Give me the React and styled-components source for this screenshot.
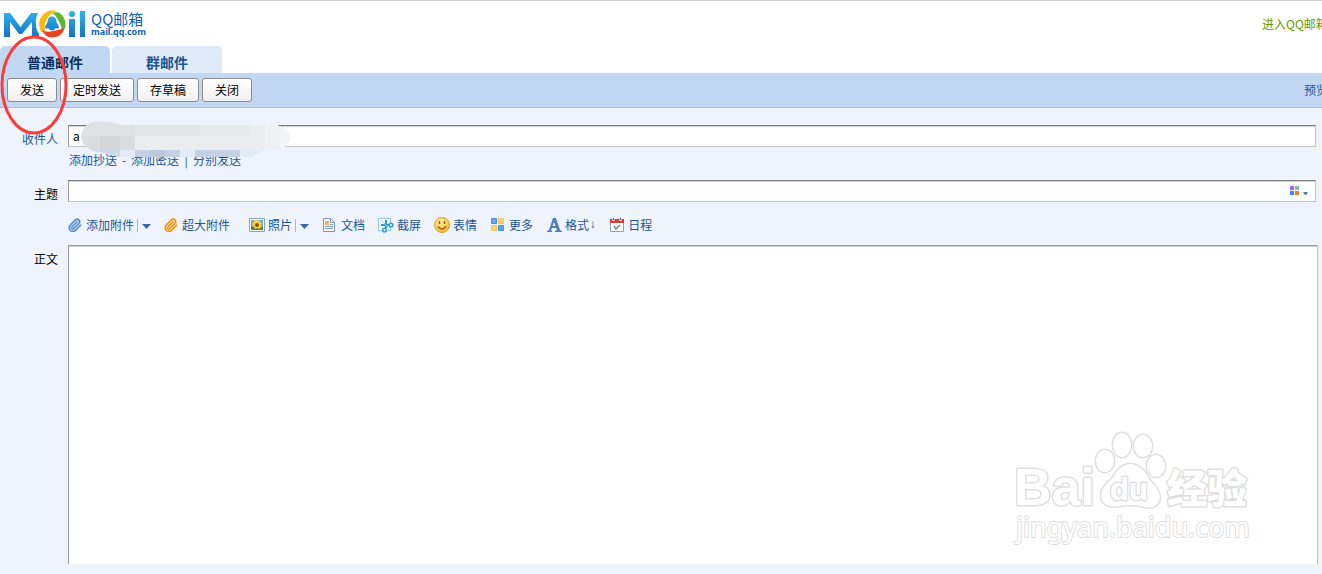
import React from "react";
import styled, { createGlobalStyle } from "styled-components";

const Global = createGlobalStyle`
  * { box-sizing: border-box; }
  body {
    margin: 0;
    background: #eff4fc;
    color: #000;
    font: 12px/16px "Noto Sans CJK SC", "Liberation Sans", sans-serif;
    overflow: hidden;
  }
  button, input, textarea { font: inherit; color: inherit; }
`;

const Page = styled.div`
  position: relative;
`;

const Header = styled.header`
  display: flex;
  justify-content: space-between;
  height: 46px;
  border-top: 1px solid #d0d0d0;
  background: #fff;
`;

const Brand = styled.a`
  display: flex;
  align-items: flex-start;
  gap: 4px;
  padding: 8px 0 0 4px;
  color: #0e63ad;
  text-decoration: none;
`;

const BrandText = styled.span`
  display: flex;
  flex-direction: column;
  padding-top: 3px;
`;

const BrandName = styled.span`
  font-size: 15px;
  line-height: 14px;
`;

const BrandHost = styled.span`
  font: bold 9px/12px "Noto Sans", sans-serif;
`;

const EnterLink = styled.a`
  width: 60px;
  padding-top: 15px;
  overflow: hidden;
  color: #619c00;
  white-space: nowrap;
  text-decoration: none;
`;

const Tabs = styled.nav`
  display: flex;
  gap: 2px;
  background: #fff;
`;

const Tab = styled.button`
  width: 110px;
  height: 27px;
  padding: 4px 0 0;
  border: 0;
  border-radius: 5px 5px 0 0;
  background: ${(p) => (p.$active ? "#c2d8f2" : "#e0ebf9")};
  color: ${(p) => (p.$active ? "#0b305f" : "#1d5494")};
  font-size: 14px;
  font-weight: bold;
`;

const ActionBar = styled.div`
  display: flex;
  align-items: center;
  gap: 3px;
  height: 35px;
  padding-left: 7px;
  border-bottom: 1px solid #a9c1dd;
  background: #c2d8f2;
`;

const ActionButton = styled.button`
  height: 24px;
  padding: 0 12px;
  border: 1px solid #8c8c8c;
  border-radius: 3px;
  background: linear-gradient(#fff, #efefef);
  white-space: nowrap;
`;

const PreviewLink = styled.a`
  width: 18px;
  margin-left: auto;
  overflow: hidden;
  color: #1d5494;
  white-space: nowrap;
  text-decoration: none;
`;

const Form = styled.form`
  display: grid;
  grid-template-columns: 58px minmax(0, 1fr);
  column-gap: 10px;
  padding: 17px 4px 0 0;
`;

const Label = styled.label`
  padding-top: 6px;
  color: ${(p) => (p.$link ? "#1d5494" : "#000")};
  text-align: right;
`;

const Field = styled.div`
  display: flex;
  position: relative;
  height: 22px;
  margin-right: 2px;
`;

const TextInput = styled.input`
  flex: 1;
  min-width: 0;
  padding: 0 4px;
  border: 1px solid #c3c3c3;
  border-top-color: #7c7c7c;
  border-left-color: #9a9a9a;
  background: #fff;
  box-shadow: inset 0 1px #d0d0d0;
  outline: 0;
`;

const Smudge = styled.svg`
  position: absolute;
  top: -5px;
  left: 12px;
`;

const ColorPicker = styled.button`
  display: flex;
  position: absolute;
  top: 6px;
  right: 7px;
  padding: 0;
  border: 0;
  background: none;
`;

const CopyLinks = styled.div`
  display: flex;
  height: 33px;
  padding-top: 5px;
  padding-left: 1px;
  color: #1d5494;
`;

const Separator = styled.span`
  width: 14px;
  text-align: center;
`;

const TextLink = styled.a`
  color: #1d5494;
  text-decoration: none;
`;

const Tools = styled.div`
  display: flex;
  align-items: center;
  gap: 13px;
  grid-column: 2;
  height: 43px;
  padding-top: 3px;
`;

const ToolGroup = styled.div`
  display: flex;
  align-items: center;
  margin-left: ${(p) => (p.$spaced ? "6px" : "0")};
`;

const Tool = styled.button`
  display: flex;
  align-items: center;
  padding: 0;
  border: 0;
  background: none;
  color: #1d5494;
  white-space: nowrap;
`;

const IconSlot = styled.span`
  display: flex;
  width: ${(p) => (p.$narrow ? "18px" : "19px")};
`;

const SortMark = styled.span`
  font-family: "Liberation Mono", monospace;
  font-weight: bold;
`;

const MenuButton = styled.button`
  display: flex;
  margin-left: 3px;
  padding: 4px 0 3px 4px;
  border: 0;
  border-left: 1px solid #b8b8b8;
  background: none;
`;

const Editor = styled.textarea`
  height: 319px;
  padding: 4px;
  border: 1px solid #999;
  border-right-color: #b8bcc6;
  border-bottom: 0;
  background: #fff;
  box-shadow: inset 0 1px #d0d0d0;
  outline: 0;
  resize: none;
`;

const Highlight = styled.svg`
  position: absolute;
  top: 35px;
  left: 0;
  pointer-events: none;
`;

const Watermark = styled.svg`
  position: absolute;
  right: 66px;
  bottom: 0;
  pointer-events: none;
`;

function MailLogo() {
  return (
    <svg width="83" height="32" viewBox="0 0 83 32" aria-hidden="true">
      <defs>
        <linearGradient id="blue" gradientUnits="userSpaceOnUse" x1="0" y1="2" x2="0" y2="28">
          <stop offset="0" stopColor="#2db4ee" />
          <stop offset="1" stopColor="#1673c4" />
        </linearGradient>
      </defs>
      <g fill="url(#blue)">
        <path d="M0 28V4h6l10.500 14L27 4h7q-3 6-2 12 0 5 3 9v3h-7V13L18 25h-3L6 13v15z" />
        <path d="M65 10h6v18h-6z" />
        <circle cx="68" cy="5" r="3" />
        <path d="M76 2h5v26h-5z" />
        <path d="M43.500 13q0-5.500 4.500-5.500t4.500 5.500l2.500 5-1 2-2-1q-4 5-8 0l-2 1-1-2z" />
      </g>
      <path d="M37 23Q32 11 41 4q5-4 12-2-7 2-10 8-3 5-2 11-1 3-4 2z" fill="#f9b90f" />
      <path d="M48 4q8-3 12 5 4 8-2 15 0-8-4-13-2-5-6-7z" fill="#61b52c" />
      <path d="M38 21q5 3 11 1 6-1 11-3-1 9-12 9.500-7 0-10-7.500z" fill="#e84424" />
    </svg>
  );
}

function Arrow() {
  return (
    <svg width="9" height="6" viewBox="0 0 9 6" aria-hidden="true">
      <path d="M0 1h9L4.500 6z" fill="#3c68a5" />
    </svg>
  );
}

function Clip({ color, light }) {
  const d =
    "m16 6-8.414 8.586a2 2 0 0 0 2.829 2.829l8.414-8.586a4 4 0 1 0-5.657-5.657l-8.379 8.551a6 6 0 1 0 8.485 8.485l8.379-8.551";
  return (
    <svg width="14" height="14" viewBox="1 0 23 23" fill="none" strokeLinecap="round" aria-hidden="true">
      <path d={d} stroke={light} strokeWidth="4" />
      <path d={d} stroke={color} strokeWidth="2" />
    </svg>
  );
}

function PhotoIcon() {
  return (
    <svg width="16" height="14" viewBox="0 0 16 14" aria-hidden="true">
      <path d="M.5.5h15v13H.5z" fill="#fff" stroke="#7ca3d2" />
      <path d="M2 2h12v10H2z" fill="#70a5d8" />
      <path d="M2 8h12v4H2z" fill="#4d8441" />
      <path d="M8 2l1 1 2-1v2l2 1-1 2 1 2-2 1-1 1-2-1-2 1-1-2-2-1 1-2-1-1 2-1V2h2z" fill="#ffd138" />
      <circle cx="8" cy="7" r="2" fill="#8a5516" />
    </svg>
  );
}

function DocIcon() {
  return (
    <svg width="14" height="14" viewBox="0 0 14 14" fill="none" aria-hidden="true">
      <path d="M1.500.5h7l4 4v9h-11z" fill="#fff" stroke="#7895c3" />
      <path d="M8.500.5v4h4M8 6.500h3M3 8.500h8M3 10.500h8" stroke="#7895c3" />
      <path d="M3 3h4v4H3z" fill="#efaf6d" />
    </svg>
  );
}

function CutIcon() {
  return (
    <svg width="16" height="15" viewBox="0 0 16 15" fill="none" aria-hidden="true">
      <path d="M.5.5h12v12H.5z" fill="#f7fcff" stroke="#8cc8ee" />
      <path d="M8 2v8M3 7h8" stroke="#289be0" strokeWidth="2" />
      <path d="M3 2l7 7" stroke="#a9d7f4" />
      <circle cx="6.500" cy="12" r="1.800" fill="#fff" stroke="#289be0" strokeWidth="1.500" />
      <circle cx="13" cy="7" r="1.800" fill="#fff" stroke="#289be0" strokeWidth="1.500" />
    </svg>
  );
}

function SmileIcon() {
  return (
    <svg width="16" height="16" viewBox="0 0 16 16" fill="none" aria-hidden="true">
      <defs>
        <radialGradient id="smile" cx=".4" cy=".3" r=".7">
          <stop offset="0" stopColor="#fff4a0" />
          <stop offset="1" stopColor="#f6b92f" />
        </radialGradient>
      </defs>
      <circle cx="8" cy="8" r="7.500" fill="url(#smile)" stroke="#dc9830" />
      <path d="M5.500 4v3M10.500 4v3M4 9.500q4 5 8 0" stroke="#996015" strokeWidth="1.500" />
    </svg>
  );
}

function MoreIcon() {
  return (
    <svg width="15" height="14" viewBox="-1 0 15 14" aria-hidden="true">
      <path d="M.5.5h5v5h-5zM7.500 7.500h5v5h-5z" fill="#65a2f1" stroke="#4d8de6" />
      <path d="M7.500.5h5v5h-5zM.5 7.500h5v5h-5z" fill="#ffd666" stroke="#f3c659" />
    </svg>
  );
}

function FormatIcon() {
  return (
    <svg width="16" height="14" viewBox="-1 0 16 14" aria-hidden="true">
      <path d="M6 0h3l4 12 2 1v1H8v-1l2-1-1-2H5l-1 2 1 1v1H0v-1l2-1zM7 4L5.500 8h3z" fill="#557fb3" />
    </svg>
  );
}

function CalendarIcon() {
  return (
    <svg width="15" height="14" viewBox="-1 0 15 14" fill="none" aria-hidden="true">
      <path d="M.5 1.500h13v12H.5z" fill="#fff" stroke="#929fba" />
      <path d="M0 1h14v4H0z" fill="#d93c39" />
      <path d="M3.500 0v3M10.500 0v3" stroke="#fff" strokeWidth="2" />
      <path d="M3.500 0v2M10.500 0v2" stroke="#8e4150" />
      <path d="M4 8l2 3 4-4" stroke="#76849b" strokeWidth="1.500" />
    </svg>
  );
}

function BlurredAddress() {
  return (
    <Smudge width="212" height="37" viewBox="0 0 212 37" aria-hidden="true">
      <defs>
        <clipPath id="smudge">
          <path d="M10 3Q22-1 42 5h155q13 5 13 13t-13 12h-12l-14 7H40l-26-6Q1 26 1 15 3 7 10 3z" />
        </clipPath>
      </defs>
      <g clipPath="url(#smudge)">
        <path d="M0 0h212v37H0z" fill="#ebecee" />
        <path d="M0 0h55v16H0z" fill="#e0e1e3" />
        <path d="M55 0h65v16H55z" fill="#e4e5e7" />
        <path d="M120 5h50v11h-50z" fill="#e8e9eb" />
        <path d="M0 16h20v14H0z" fill="#dbdcdd" />
        <path d="M20 16h20v14H20z" fill="#d5d6d8" />
        <path d="M40 16h15v14H40z" fill="#d8dddd" />
        <path d="M185 5h27v25h-27z" fill="#eff0f2" />
        <path d="M200 5h12v25h-12z" fill="#f4f5f8" />
        <path d="M0 30h212v7H0z" fill="#e3ebf5" />
        <path d="M10 30h30v7H10z" fill="#cdd9e9" />
        <path d="M55 30h15v7H55zM85 30h15v7H85zM115 30h45v7h-45z" fill="#c4d1e5" />
        <path d="M70 30h15v7H70z" fill="#bac7dd" />
      </g>
    </Smudge>
  );
}

function BaiduMark() {
  return (
    <Watermark width="246" height="146" viewBox="0 0 246 146" aria-hidden="true">
      <g fill="#fff" stroke="#dfdfdf" strokeWidth="3" paintOrder="stroke" strokeLinejoin="round">
        <ellipse cx="95" cy="43" rx="9" ry="11" />
        <ellipse cx="112" cy="27" rx="9" ry="12" />
        <ellipse cx="133" cy="28" rx="9" ry="11" />
        <ellipse cx="146" cy="48" rx="9" ry="11" />
        <path d="M107 53q13-14 27 0 4 8 12 16 8 13-1 19-6 3-14 0-11-2-22 0-10 2-16-4-5-9 4-19 6-4 10-12z" />
        <g fontFamily="Liberation Sans" fontWeight="bold">
          <text x="4" y="87" fontSize="52">Bai</text>
          <text x="100" y="82" fontSize="31">du</text>
        </g>
        <text x="157" y="85" fontSize="40" fontWeight="900" fontFamily="Noto Sans CJK SC">经验</text>
        <text x="6" y="119" fontSize="27" fontFamily="Noto Sans" strokeWidth="2">jingyan.baidu.com</text>
      </g>
    </Watermark>
  );
}

const tools = [
  { label: "添加附件", icon: <Clip color="#5386bd" light="#b9d3ee" />, menu: true, narrow: true },
  { label: "超大附件", icon: <Clip color="#e28b20" light="#ffd580" />, narrow: true },
  { label: "照片", icon: <PhotoIcon />, menu: true, spaced: true },
  { label: "文档", icon: <DocIcon /> },
  { label: "截屏", icon: <CutIcon /> },
  { label: "表情", icon: <SmileIcon /> },
  { label: "更多", icon: <MoreIcon /> },
  { label: "格式", icon: <FormatIcon />, mark: "↓" },
  { label: "日程", icon: <CalendarIcon /> },
];

export default function App() {
  return (
    <Page>
      <Global />
      <Header>
        <Brand href="#home">
          <MailLogo />
          <BrandText>
            <BrandName>QQ邮箱</BrandName>
            <BrandHost>mail.qq.com</BrandHost>
          </BrandText>
        </Brand>
        <EnterLink href="#mail">进入QQ邮箱</EnterLink>
      </Header>
      <Tabs>
        <Tab type="button" $active>普通邮件</Tab>
        <Tab type="button">群邮件</Tab>
      </Tabs>
      <ActionBar>
        {["发送", "定时发送", "存草稿", "关闭"].map((label) => (
          <ActionButton type="button" key={label}>{label}</ActionButton>
        ))}
        <PreviewLink href="#preview">预览</PreviewLink>
      </ActionBar>
      <Form>
        <Label htmlFor="to" $link>收件人</Label>
        <div>
          <Field>
            <TextInput id="to" defaultValue="a" />
            <BlurredAddress />
          </Field>
          <CopyLinks>
            <TextLink href="#cc">添加抄送</TextLink>
            <Separator>-</Separator>
            <TextLink href="#bcc">添加密送</TextLink>
            <Separator>|</Separator>
            <TextLink href="#separate">分别发送</TextLink>
          </CopyLinks>
        </div>
        <Label htmlFor="subject">主题</Label>
        <Field>
          <TextInput id="subject" />
          <ColorPicker type="button" aria-label="颜色">
            <svg width="19" height="10" viewBox="0 0 19 10">
              <path d="M0 0h4v4H0z" fill="#b060f0" />
              <path d="M5 0h4v4H5z" fill="#86bfa3" />
              <path d="M0 5h4v4H0z" fill="#4084e0" />
              <path d="M5 5h4v4H5z" fill="#ea7c2c" />
              <path d="M13 6h5l-2 3h-1z" fill="#54749b" />
            </svg>
          </ColorPicker>
        </Field>
        <Tools>
          {tools.map(({ label, icon, menu, mark, narrow, spaced }) => (
            <ToolGroup key={label} $spaced={spaced}>
              <Tool type="button">
                <IconSlot $narrow={narrow}>{icon}</IconSlot>
                {label}
                {mark && <SortMark>{mark}</SortMark>}
              </Tool>
              {menu && (
                <MenuButton type="button" aria-label={label + "菜单"}><Arrow /></MenuButton>
              )}
            </ToolGroup>
          ))}
        </Tools>
        <Label htmlFor="body">正文</Label>
        <Editor id="body" />
      </Form>
      <Highlight width="70" height="102" viewBox="0 0 70 102" aria-hidden="true">
        <ellipse cx="34" cy="50" rx="32" ry="48" fill="none" stroke="#fa3c3c" strokeWidth="3" />
      </Highlight>
      <BaiduMark />
    </Page>
  );
}
